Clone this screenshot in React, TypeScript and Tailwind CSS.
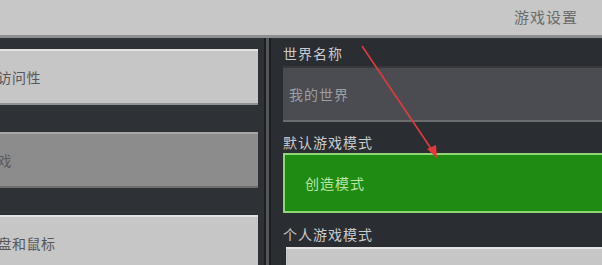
import React from "react";

const font = { fontFamily: '"Noto Sans CJK SC", "Noto Sans", sans-serif' };

const SideButton = ({ label, active }: { label: string; active?: boolean }) => (
  <div
    className={
      "h-[56px] w-[258px] flex items-center border-t-2 border-b-2 " +
      (active
        ? "bg-[#8c8c8c] border-t-[#a6a6a6] border-b-[#6e6e6e] text-[#5c5c5c]"
        : "bg-[#c6c6c6] border-t-[#e2e2e2] border-b-[#8f8f8f] text-[#55575a]")
    }
  >
    <span className="-ml-[17px] text-[14px] tracking-[0.5px]">{label}</span>
  </div>
);

const Label = ({ text, h }: { text: string; h: string }) => (
  <div className={"flex items-center text-[14px] text-[#c9cacc] tracking-[1px] " + h}>
    {text}
  </div>
);

const App = () => {
  return (
    <div className="relative w-[602px] h-[265px] overflow-hidden bg-[#2c2f34] flex flex-col" style={font}>
      {/* header */}
      <div className="h-[35px] shrink-0 bg-[#c7c7c7] flex items-center justify-end pr-[24px]">
        <span className="text-[15px] text-[#6b6b6b] tracking-[1px]">游戏设置</span>
      </div>
      <div className="h-[3px] shrink-0 bg-[#8d8f92]" />

      <div className="flex flex-1">
        {/* left menu */}
        <div className="w-[266px] shrink-0 bg-[#2e3136] pt-[11px] flex flex-col gap-[27px] border-r-2 border-[#1c1e22]">
          <SideButton label="可访问性" />
          <SideButton label="游戏" active />
          <SideButton label="键盘和鼠标" />
        </div>
        <div className="w-[5px] shrink-0 bg-[#53575c] border-r-2 border-[#1c1e22]" />

        {/* settings */}
        <div className="flex-1 bg-[#2a2d32] pl-[12px] flex flex-col">
          <Label text="世界名称" h="h-[28px] pt-[2px]" />
          <div className="h-[56px] bg-[#4a4c51] border-t-2 border-[#36383c] border-b-2 border-b-[#6a6c70] flex items-center pl-[6px]">
            <span className="text-[14px] text-[#9d9ea1] tracking-[1px]">我的世界</span>
          </div>
          <Label text="默认游戏模式" h="h-[31px] pt-[10px]" />
          <div className="h-[60px] bg-[#1f8b12] border-2 border-[#8ed676] border-r-0 flex items-center pl-[20px]">
            <span className="text-[14px] text-[#b9e6a4] tracking-[1px]">创造模式</span>
          </div>
          <Label text="个人游戏模式" h="h-[34px] pt-[8px]" />
          <div className="flex-1 bg-[#c6c6c6] border-t-2 border-[#e4e4e4] ml-[3px]" />
        </div>
      </div>

      {/* annotation arrow */}
      <svg className="absolute left-0 top-0 pointer-events-none" width="602" height="265">
        <line x1="362" y1="46" x2="432" y2="150" stroke="#e23a3a" strokeWidth="1.6" />
        <polygon points="437,158 427,149 436,145" fill="#e23a3a" />
      </svg>
    </div>
  );
};

export default App;
